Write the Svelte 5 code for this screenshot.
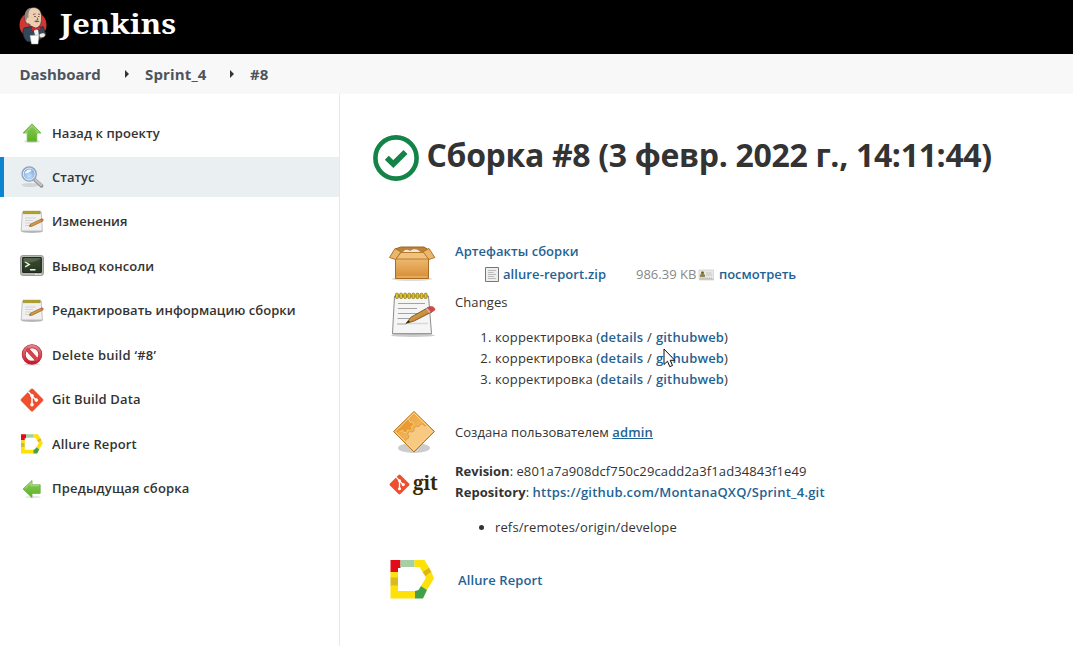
<script>
  const tasks = [
    { icon: 'up', label: 'Назад к проекту', ls: 0.08 },
    { icon: 'search', label: 'Статус', ls: 0, active: true },
    { icon: 'notepad', label: 'Изменения', ls: 0 },
    { icon: 'terminal', label: 'Вывод консоли', ls: 0.08 },
    { icon: 'notepad', label: 'Редактировать информацию сборки', ls: 0.03 },
    { icon: 'delete', label: 'Delete build ‘#8’', ls: 0.25 },
    { icon: 'git', label: 'Git Build Data', ls: 0.12 },
    { icon: 'allure', label: 'Allure Report', ls: 0.12 },
    { icon: 'prev', label: 'Предыдущая сборка', ls: 0.17 }
  ];
  const changes = ['корректировка', 'корректировка', 'корректировка'];
</script>

{#snippet gitMark()}
  <path d="M10.9 1.1a1.6 1.6 0 0 1 2.2 0L22.9 10.9a1.6 1.6 0 0 1 0 2.2L13.1 22.9a1.6 1.6 0 0 1-2.2 0L1.1 13.1a1.6 1.6 0 0 1 0-2.2z" fill="#ee4f2e" />
  <path d="M8.2 3.8 12 7.6v9M12 8l4 4" fill="none" stroke="#fff" stroke-width="1.5" />
  <circle cx="12" cy="7.7" r="1.8" fill="#fff" />
  <circle cx="12" cy="16.8" r="1.8" fill="#fff" />
  <circle cx="16.3" cy="12.1" r="1.8" fill="#fff" />
{/snippet}

{#snippet allureMark()}
  <path d="M2 2H12V10H9.5V14H2z" fill="#e30b17" />
  <path d="M12 2H26V9H12z" fill="#a3d0a4" />
  <path d="M26 2H36L40.5 9.5 34 14 31 9H26z" fill="#ffe10a" />
  <path d="M40.5 9.5 43 14 37 18.5 34 14z" fill="#ddb90a" />
  <path d="M43 14 45.5 20.5 38.5 32 32.5 28 37 20.5V18.5z" fill="#ffe10a" />
  <path d="M32.5 28 38.5 32 34.5 40.5H26.5V33L30 32z" fill="#44a047" />
  <path d="M2 27H9.5V33H26.5V40.5H2z" fill="#ffe10a" />
  <path d="M2 19H9.5V27.5H2z" fill="#d9bb1a" />
  <path d="M2 14H9.5V19.5H2z" fill="#ffe10a" />
{/snippet}

{#snippet icon(name)}
  <svg class="icon" viewBox="0 0 24 24">
    {#if name === 'up'}
      <ellipse cx="12" cy="20.5" rx="8" ry="1.4" fill="#ddd" />
      <path d="M12 2.8 21 12h-4.2v8.3H7.2V12H3z" fill="url(#green)" stroke="#6db244" stroke-width=".8" />
      <path d="M12 4.5 18.5 11h-3M8 12H5.5L12 5" fill="none" stroke="#b6e88c" stroke-width=".7" />
    {:else if name === 'prev'}
      <ellipse cx="13" cy="20" rx="8" ry="1.2" fill="#e6e6e6" />
      <path d="M3 12 12 3.5v4.3h8.2v8.6H12v4.3z" fill="url(#green)" stroke="#70ae55" stroke-width=".8" />
      <path d="M5 11.5 11.2 5.5v3.2h8" fill="none" stroke="#c1e7ad" stroke-width=".7" />
    {:else if name === 'search'}
      <ellipse cx="10" cy="20" rx="8.5" ry="2" fill="#d2d6d8" />
      <path d="m14.5 14.5 7 6.3" stroke="#8a8a8a" stroke-width="3.6" stroke-linecap="round" />
      <path d="m15 14.6 6.2 5.7" stroke="#c5c5c5" stroke-width="2.2" stroke-linecap="round" />
      <circle cx="9.2" cy="9" r="7.2" fill="url(#lens)" stroke="#98a3b5" stroke-width="1.3" />
      <circle cx="9.2" cy="9" r="5.9" fill="none" stroke="#e0ebfa" stroke-width="1" />
      <path d="M4.7 8.4c.5-3 4-5 7-3.5-1.4 2.2-3.8 3.2-7 3.5z" fill="#eff6ff" />
    {:else if name === 'notepad'}
      <ellipse cx="12" cy="21.6" rx="11" ry="1.3" fill="#bbb" />
      <path d="M2.3 2h18.9l1.2 19H1.2z" fill="#f0f0f0" stroke="#aaa" stroke-width=".7" />
      <path d="M3 .8h17.500v3.300H3z" fill="#a99b31" />
      <path d="M5 1.3v2.500m3-2.500v2.500m3-2.500v2.500m3-2.500v2.500m3-2.500v2.500" stroke="#b7a73a" />
      <path d="M5 8h11M5 10.5h8M5 13h6M5 15.5h6" stroke="#ccc" stroke-width=".8" />
      <path d="m12 15.6-3.2 1.2 2-2.9" fill="#444" />
      <path d="m10.2 14.3 11.6-5.5.8 2.4-10.5 5-2.1.2z" fill="#d69a45" stroke="#8e652a" stroke-width=".7" />
      <path d="m20.4 9.4 2.6-1 .8 2-2.5 1.2z" fill="#d46850" />
    {:else if name === 'terminal'}
      <rect x=".5" y="1.5" width="23" height="20" rx="2.4" fill="#b5b7b3" stroke="#9a9c98" />
      <rect x="2.7" y="3.5" width="18.6" height="15" rx=".7" fill="url(#screen)" stroke="#222a1f" stroke-width="1.2" />
      <path d="M3.5 9Q14 9 20.6 4.4V4H3.5z" fill="#6b7d60" opacity=".55" />
      <path d="m5.2 8 4 2.4-4 2.4M10 15.7h5.5" fill="none" stroke="#e5f5df" stroke-width="1.4" />
      <path d="M15 20.4h3m1 0h2" stroke="#eee" stroke-width=".9" />
    {:else if name === 'delete'}
      <ellipse cx="12" cy="21.3" rx="8" ry="1.2" fill="#ddd" />
      <circle cx="12" cy="11.5" r="8.3" fill="#faf7f7" stroke="#b42431" stroke-width="3.9" />
      <path d="m6.5 5.5 11 12" stroke="#b42431" stroke-width="3.8" />
      <circle cx="12" cy="11.5" r="8.3" fill="none" stroke="url(#red)" stroke-width="2.8" />
      <path d="m6.5 5.5 11 12" stroke="#d8444e" stroke-width="2.7" />
    {:else if name === 'git'}
      {@render gitMark()}
    {:else if name === 'allure'}
      <g transform="translate(0 1.2) scale(.5)">{@render allureMark()}</g>
    {/if}
  </svg>
{/snippet}

<svg class="defs" width="0" height="0">
  <defs>
    <linearGradient id="green" x1="0" y1="0" x2="0" y2="1"><stop stop-color="#8fc860" /><stop offset="1" stop-color="#58b41d" /></linearGradient>
    <radialGradient id="lens" cy=".65"><stop stop-color="#c6e0ff" /><stop offset="1" stop-color="#7fabd9" /></radialGradient>
    <linearGradient id="screen" x1="0" y1="0" x2="0" y2="1"><stop stop-color="#3b4b33" /><stop offset="1" stop-color="#263620" /></linearGradient>
    <linearGradient id="red" x1="0" y1="0" x2="0" y2="1"><stop stop-color="#e18289" /><stop offset="1" stop-color="#c91b2b" /></linearGradient>
    <linearGradient id="box" x1="0" y1="0" x2="0" y2="1"><stop stop-color="#efbc72" /><stop offset="1" stop-color="#d68d35" /></linearGradient>
    <linearGradient id="pencil" x1="0" y1="0" x2="1" y2="1"><stop stop-color="#edb45c" /><stop offset="1" stop-color="#a96e20" /></linearGradient>
    <linearGradient id="amber" x1="0" y1="0" x2="1" y2="1"><stop stop-color="#ec9e31" /><stop offset="1" stop-color="#f6c87e" /></linearGradient>
  </defs>
</svg>

<div class="page">
  <header>
    <svg class="butler" viewBox="0 0 28 38">
      <circle cx="14" cy="18" r="13.5" fill="#cf3732" />
      <path d="M6 12C5 4 10 .5 15 .5c5 .2 8 4.5 7.5 10.5 0 6-2 10-6 10-3 0-5-1.5-6-4C7.5 17 6 15 6 12z" fill="#edceb1" stroke="#332c28" stroke-width=".6" />
      <path d="M6 12C5 5 8 1.5 12 .8 9.5 4 9 8 9.5 11L8 10.5l-.5 3z" fill="#8d8580" />
      <path d="M14 7.5l2.5-.7M19 7l2 .4M15 9.5h2M19 9.5h1.5M18 10.5l1 2-1.5.4" fill="none" stroke="#4a352b" stroke-width=".7" />
      <path d="M15 14.2c2-1.2 4-1 5.7.3-2 .9-4 .9-5.7-.3z" fill="#6e5549" />
      <path d="M5 21l7-1.5 5 3 7-3 3 8-3 3-8 5-8-1C4 31 3 25 5 21z" fill="#33485a" stroke="#172530" stroke-width=".7" />
      <path d="m14 21 5 1 1 7-4-1z" fill="#eee" />
      <path d="m12.5 19 4.5 2.5 4-2.5.7 4-4.5-.7-4.2 2z" fill="#d52b31" stroke="#761d20" stroke-width=".5" />
      <path d="M11 28.5l9-.5-1 9h-6.5z" fill="#fff" stroke="#aaa" stroke-width=".5" />
      <path d="M20 28c1-2 5-3 6-1s-1 4-5 3.6z" fill="#f4e8df" stroke="#444" stroke-width=".5" />
    </svg>
    <span class="brand">Jenkins</span>
  </header>

  <nav class="crumbs">
    <span class="c1">Dashboard</span><i></i><span class="c2">Sprint_4</span><i></i><span class="c3">#8</span>
  </nav>

  <div class="body">
    <aside>
      {#each tasks as t}
        <div class="task" class:active={t.active}>
          {@render icon(t.icon)}
          <span style="letter-spacing: {t.ls}px">{t.label}</span>
        </div>
      {/each}
    </aside>

    <main>
      <h1>
        <svg class="ok" viewBox="0 0 46 46">
          <circle cx="23" cy="23" r="20.6" fill="none" stroke="#138347" stroke-width="4.6" />
          <path d="m13.8 22.8 6.5 6.3 12.2-12.2" fill="none" stroke="#138347" stroke-width="5.6" />
        </svg>
        <span>Сборка #8 (3 февр. 2022 г., 14:11:44)</span>
      </h1>

      <section class="row artifacts">
        <svg class="big" viewBox="0 0 48 48">
          <ellipse cx="24" cy="41" rx="20" ry="2" fill="#ddd" />
          <path d="M7 11 13 9h23l5 3v6H7z" fill="#b98338" stroke="#a0681f" />
          <path d="M14 16c2-5 5-5 8-3 4-3 9-2 12 3z" fill="#ece8e3" />
          <path d="M7.5 19h33v21.5h-33z" fill="url(#box)" stroke="#a96b21" />
          <path d="M8.5 39h31" stroke="#f2c27a" />
          <path d="M7 10.5 1.5 19.5l6.2 2L13 14zM41 10.5l5.8 9-6 2-6-7.5z" fill="#e9b66b" stroke="#b0752c" />
          <path d="M13 14.5h22.5l5 6.5H8z" fill="#f1c27c" stroke="#b77a2e" />
        </svg>
        <div class="info">
          <div><a class="art" href="#artifacts">Артефакты сборки</a></div>
          <div class="file">
            <svg class="doc" viewBox="0 0 14 15"><path d="M.5.5h13v14H.5z" fill="#eee" stroke="#777" /><path d="M3 3.5h8M3 5.5h5.5M3 7.5h8M3 9.5h6M3 11.5h8" stroke="#bbb" /></svg>
            <a class="zip" href="#zip">allure-report.zip</a>
            <span class="size">986.39 KB</span>
            <svg class="print" viewBox="0 0 16 12"><path d="M1 1h14.5v9H1z" fill="#e8e8e6" stroke="#ccc" stroke-width=".7" /><path d="M1 9.8h15v1.5H1z" fill="#c9c9c7" /><path d="M2 8V5.5h1.2V3h2.600v2.5H7V8z" fill="#8f8442" /><path d="M3.5 2.5h2v2h-2z" fill="#675720" /><path d="M8 4h5.5M8 6h6" stroke="#bbb" stroke-width=".8" /><path d="M2 9.2h12" stroke="#999" stroke-width=".7" stroke-dasharray="1.5 .7" /></svg>
            <a class="view" href="#view">посмотреть</a>
          </div>
        </div>
      </section>

      <section class="row changes">
        <svg class="big" viewBox="0 0 48 48">
          <ellipse cx="25" cy="44.5" rx="22" ry="1.4" fill="#ccc" />
          <path d="M6.5 5h34l3 37.5h-39z" fill="#f5f5f5" stroke="#8c8c8c" />
          <path d="M4.3 42h39.5v1.500H4.300z" fill="#999" />
          {#each [0, 1, 2, 3, 4, 5, 6, 7] as n}
            <rect x={7.5 + n * 4.1} y="2.2" width="2.9" height="5.3" rx="1.1" fill="#dfc32e" stroke="#88751a" stroke-width=".8" />
          {/each}
          <path d="M10 12.5h27M10 17.5h19M10 22.5h23M9.5 27.5h14M9 33h9" stroke="#a3a3a3" stroke-width="1.1" />
          <path d="M20 32.5h20" stroke="#d8d8d8" stroke-width="1.5" />
          <path d="m18 32.5 5-6.3 17-9.6 4 4.2-17.5 9z" fill="url(#pencil)" stroke="#76501d" stroke-width=".9" />
          <path d="m18 32.5 2.5-3 1.5 1.6z" fill="#222" />
          <path d="M38.5 17.5 42 15.5c3-.8 6.5 2.5 4.3 4l-3.8 2.2z" fill="#dc4343" stroke="#9c3030" stroke-width=".5" />
          <path d="m37.8 17.8 1.5-.8 3.5 4-1.6.9z" fill="#b9b9b9" />
        </svg>
        <div class="info">
          <div class="ch">Changes</div>
          <ol>
            {#each changes as c}
              <li><span class="msg">{c} (</span><a href="#details">details</a><span class="slash">{' / '}</span><a href="#github">githubweb</a>)</li>
            {/each}
          </ol>
        </div>
      </section>

      <section class="row cause">
        <svg class="big" viewBox="0 0 48 48">
          <ellipse cx="25" cy="39" rx="16" ry="5" fill="#ccc" />
          <path d="M25 2.5 45.5 22.5 25 43 4.5 22.5z" fill="url(#amber)" />
          <path d="m17.8 9.8 2.2.7 1 3 3-.4.6 3-2.4 1.5 1.2 2.8-2.8 1.5-1.8-1.2-1.4 3-3-.4-.6-2.2-4 2.5-4.500-1.300z" fill="#e99a30" />
          <path d="m38.5 16-3.2 1-1-2.2-3 .7-1.5 2.2-2.6-.5-2.4 2 .2 2.600-2.600 1.200-2.200-.8-1.600 3 1.500 2-1.300 2.600-2.600.5.5 4.200L25 42.500l19.500-20z" fill="#f7c981" stroke="#d99339" stroke-width=".8" />
          <path d="m17.800 9.800 2.200.7 1 3 3-.4.600 3-2.400 1.500 1.200 2.800-2.800 1.500-1.800-1.200-1.400 3-3-.4-.6-2.200-4 2" fill="none" stroke="#f5c578" stroke-width="1" />
          <path d="M25 2.5 45.5 22.5 25 43 4.5 22.5z" fill="none" stroke="#c27818" />
          <path d="M25 4 43.8 22.5 25 41.3 6.2 22.5z" fill="none" stroke="#ffdca0" stroke-width=".9" />
        </svg>
        <div class="info">Создана пользователем <a class="admin" href="#admin">admin</a></div>
      </section>

      <section class="row git">
        <div class="gitlogo">
          <svg viewBox="0 0 24 24">{@render gitMark()}</svg><b>git</b>
        </div>
        <div class="info">
          <div class="rev"><b>Revision</b>: <span>e801a7a908dcf750c29cadd2a3f1ad34843f1e49</span></div>
          <div class="repo"><b>Repository</b>: <a href="#repo">https://github.com/MontanaQXQ/Sprint_4.git</a></div>
          <ul><li>refs/remotes/origin/develope</li></ul>
        </div>
      </section>

      <section class="row allure">
        <svg class="big" viewBox="0 0 48 48"><g transform="translate(.5 3)">{@render allureMark()}</g></svg>
        <a class="report" href="#allure">Allure Report</a>
      </section>
    </main>
  </div>

  <svg class="cursor" viewBox="0 0 13 20"><path d="M1 1v15.5l3.5-3.3 2.3 5.5 2.7-1.2-2.3-5.2h4.6z" fill="#fff" stroke="#111" /></svg>
</div>

<style>
  :global(body) { margin: 0; background: #fff; }
  .page { position: relative; width: 1073px; height: 646px; overflow: hidden; display: flex; flex-direction: column; font: 13px/21px "Open Sans", "Noto Sans", sans-serif; color: #333; white-space: nowrap; }
  .defs { position: absolute; }
  svg { flex: none; display: block; }
  header { height: 54px; flex: none; background: #000; display: flex; padding-left: 19px; box-sizing: border-box; }
  .butler { width: 28px; height: 38px; margin-top: 7px; }
  .brand { margin: 5px 0 0 13px; font: bold 27px/38px "Noto Serif", "DejaVu Serif", serif; color: #fff; transform: scaleX(1.14); transform-origin: 0 0; }
  .crumbs { height: 40px; flex: none; background: #f8f8f8; display: flex; align-items: center; padding-left: 19.5px; font-size: 15px; font-weight: 700; color: #4d545d; }
  .crumbs i { border: 4px solid transparent; border-left: 4.5px solid #333; border-right: 0; margin: 0 16px 0 24px; }
  .c1, .c2 { flex: none; }
  .c1 { width: 81.5px; letter-spacing: -.05px; }
  .c2 { width: 61px; letter-spacing: .15px; }
  .body { flex: 1; display: flex; }
  aside { width: 339px; flex: none; border-right: 1px solid #e8e8e8; padding-top: 19px; display: flex; flex-direction: column; gap: 4.45px; }
  .task { height: 40px; display: flex; align-items: center; gap: 8px; padding-left: 20px; font-weight: 600; }
  .task.active { background: #eaeff2; box-shadow: inset 4px 0 #0b85cf; }
  .icon { width: 24px; height: 24px; }
  main { flex: 1; padding-left: 33px; display: flex; flex-direction: column; }
  h1 { margin: 41px 0 60px; height: 46px; display: flex; gap: 7.5px; font-size: 32px; line-height: 39px; font-weight: 700; letter-spacing: -.33px; }
  .ok { width: 46px; height: 46px; }
  .row { display: flex; padding-left: 15px; }
  .big { width: 48px; height: 48px; }
  .info { padding-left: 19px; }
  a { color: #1f6393; text-decoration: none; font-weight: 600; }
  .artifacts { height: 51px; }
  .artifacts .big { margin-top: -3px; }
  .art { letter-spacing: .04px; }
  .file { display: flex; align-items: center; padding-left: 30px; margin-top: 2px; }
  .doc { width: 14px; height: 15px; margin-right: 4px; }
  .zip { width: 133px; letter-spacing: .08px; }
  .size { color: #888; width: 62px; }
  .print { width: 16px; height: 12px; margin-right: 5px; }
  .view { letter-spacing: -.05px; }
  .changes { height: 118px; }
  .changes .big { margin-top: -1px; }
  .ch { letter-spacing: .1px; }
  ol, ul { margin: 14px 0 0; padding-left: 40px; }
  ol li { letter-spacing: .14px; }
  ol a { letter-spacing: .15px; }
  .slash { white-space: pre; letter-spacing: .4px; }
  .cause { height: 51px; }
  .cause .big { margin: -1px 0 0 .5px; }
  .cause .info { padding: 12px 0 0 18.5px; letter-spacing: .03px; }
  .cause .admin { text-decoration: underline; letter-spacing: .15px; }
  .git { height: 94px; }
  .gitlogo { width: 48px; height: 46px; display: flex; align-items: center; gap: 3.5px; }
  .gitlogo svg { width: 21px; height: 21px; margin-left: .5px; }
  .gitlogo b { font: bold 19px/22px "Noto Serif", "DejaVu Serif", serif; color: #362701; margin-top: -2px; letter-spacing: -.2px; }
  .rev span { letter-spacing: .12px; }
  .repo { letter-spacing: .07px; }
  .repo a { letter-spacing: .21px; }
  ul li { letter-spacing: .13px; }
  .allure { align-items: center; height: 48px; }
  .report { padding: 2px 0 0 22px; letter-spacing: .1px; }
  .cursor { position: absolute; left: 663px; top: 348px; width: 13px; height: 20px; }
</style>
